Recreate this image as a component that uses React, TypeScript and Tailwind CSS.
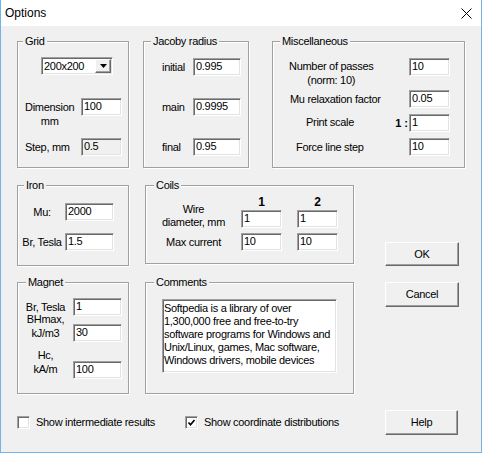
import React from 'react';

const sunken =
  'border border-t-[#a0a0a0] border-l-[#a0a0a0] border-b-white border-r-white shadow-[inset_1px_1px_0_#696969,inset_-1px_-1px_0_#e3e3e3]';
const raised =
  'border border-t-white border-l-white border-b-[#696969] border-r-[#696969] shadow-[inset_-1px_-1px_0_#a0a0a0] bg-[#f0f0f0]';

function Group({
  title,
  className,
  labelClass = 'left-[7px]',
  children,
}: {
  title: string;
  className: string;
  labelClass?: string;
  children?: React.ReactNode;
}) {
  return (
    <div className={`relative shrink-0 border border-[#a0a0a0] shadow-[inset_1px_1px_0_#fff,1px_1px_0_#fff] ${className}`}>
      <span className={`absolute -top-[7px] bg-[#f0f0f0] px-[2px] leading-[13px] ${labelClass}`}>{title}</span>
      {children}
    </div>
  );
}

function Field({ value, w, gray }: { value: string; w: string; gray?: boolean }) {
  return (
    <div className={`${sunken} ${w} h-[18px] shrink-0 pl-[2px] leading-[15px] text-[11px] ${gray ? 'bg-[#f0f0f0]' : 'bg-white'}`}>
      {value}
    </div>
  );
}

function Button({ label, className }: { label: string; className: string }) {
  return <div className={`${raised} ${className} flex shrink-0 items-center justify-center`}>{label}</div>;
}

function Check({ checked, label }: { checked?: boolean; label: string }) {
  return (
    <div className="flex items-center">
      <div className={`${sunken} flex h-[13px] w-[13px] items-center justify-center bg-white`}>
        {checked && (
          <svg width="9" height="9" viewBox="0 0 9 9">
            <polyline points="1.5,4.5 3.5,6.8 7.5,2" fill="none" stroke="#000" strokeWidth="1.7" />
          </svg>
        )}
      </div>
      <span className="ml-[6px] leading-[13px]">{label}</span>
    </div>
  );
}

export default function App() {
  const comments = [
    'Softpedia is a library of over',
    '1,300,000 free and free-to-try',
    'software programs for Windows and',
    'Unix/Linux, games, Mac software,',
    'Windows drivers, mobile devices',
  ];

  return (
    <div className="flex h-[453px] w-[482px] flex-col border-x border-b border-[#72b3ec] bg-[#f0f0f0] font-['Liberation_Sans',Arial,sans-serif] text-[11px] tracking-[-0.3px] text-black">
      {/* title bar */}
      <div className="flex h-[26px] shrink-0 items-center justify-between bg-white pl-[4px] pr-[9px]">
        <span className="text-[12px] tracking-normal">Options</span>
        <svg width="11" height="11" viewBox="0 0 11 11">
          <path d="M0.5 0.5 L10.5 10.5 M10.5 0.5 L0.5 10.5" stroke="#000" strokeWidth="1" />
        </svg>
      </div>

      <div className="flex flex-1 flex-col pl-[16px] pt-[15px]">
        {/* row 1 */}
        <div className="flex">
          <Group title="Grid" className="h-[127px] w-[112px]" labelClass="left-[5px]">
            <div className="flex flex-col">
              <div className={`${sunken} ml-[23px] mt-[15px] flex h-[18px] w-[72px] items-center justify-between bg-white pl-[2px] pr-[1px]`}>
                <span className="text-[11px]">200x200</span>
                <div className={`${raised} flex h-[14px] w-[16px] items-center justify-center`}>
                  <svg width="7" height="4" viewBox="0 0 7 4">
                    <polygon points="0,0 7,0 3.5,4" fill="#000" />
                  </svg>
                </div>
              </div>
              <div className="mt-[23px] flex h-[18px] items-start">
                <div className="w-[63px] pl-[7px] pt-[1px]">
                  <div className="inline-flex flex-col items-center leading-[14px]">
                    <span>Dimension</span>
                    <span>mm</span>
                  </div>
                </div>
                <Field value="100" w="w-[41px]" />
              </div>
              <div className="mt-[22px] flex h-[18px] items-center">
                <div className="w-[63px] pl-[7px]">Step, mm</div>
                <Field value="0.5" w="w-[41px]" gray />
              </div>
            </div>
          </Group>

          <Group title="Jacoby radius" className="ml-[14px] h-[127px] w-[106px]">
            <div className="flex flex-col pl-[18px]">
              {[
                ['initial', '0.995', 'mt-[16px]'],
                ['main', '0.9995', 'mt-[22px]'],
                ['final', '0.95', 'mt-[22px]'],
              ].map(([l, v, m]) => (
                <div key={l} className={`${m} flex h-[18px] items-center`}>
                  <div className="w-[31px]">{l}</div>
                  <Field value={v} w="w-[48px]" />
                </div>
              ))}
            </div>
          </Group>

          <Group title="Miscellaneous" className="ml-[23px] h-[127px] w-[193px]">
            <div className="flex flex-col">
              <div className="mt-[16px] flex h-[18px] items-start">
                <div className="w-[136px] pl-[16px]">
                  <div className="-mt-[1px] inline-flex flex-col items-center leading-[14px]">
                    <span>Number of passes</span>
                    <span>(norm: 10)</span>
                  </div>
                </div>
                <Field value="10" w="w-[41px]" />
              </div>
              <div className="mt-[14px] flex h-[18px] items-center">
                <div className="w-[136px] pl-[17px]">Mu relaxation factor</div>
                <Field value="0.05" w="w-[41px]" />
              </div>
              <div className="mt-[6px] flex h-[18px] items-center">
                <div className="flex w-[136px] items-center justify-between pl-[33px] pr-[1px]">
                  <span className="-mt-[2px]">Print scale</span>
                  <span className="text-[11px] font-bold tracking-normal">1 :</span>
                </div>
                <Field value="1" w="w-[41px]" />
              </div>
              <div className="mt-[6px] flex h-[18px] items-center">
                <div className="w-[136px] pl-[23px]">Force line step</div>
                <Field value="10" w="w-[41px]" />
              </div>
            </div>
          </Group>
        </div>

        {/* rows 2 and 3 with buttons */}
        <div className="mt-[17px] flex">
          <div className="flex flex-col">
            <div className="flex h-[81px] items-start">
              <Group title="Iron" className="h-[81px] w-[112px]" labelClass="left-[6px]">
                <div className="flex flex-col pl-[1px]">
                  <div className="mt-[17px] flex h-[18px] items-center">
                    <div className="w-[46px] text-center">Mu:</div>
                    <Field value="2000" w="w-[49px]" />
                  </div>
                  <div className="mt-[12px] flex h-[18px] items-center">
                    <div className="w-[46px] text-center">Br, Tesla</div>
                    <Field value="1.5" w="w-[49px]" />
                  </div>
                </div>
              </Group>

              <Group title="Coils" className="ml-[16px] h-[79px] w-[209px]" labelClass="left-[8px]">
                <div className="flex flex-col">
                  <div className="mt-[9px] flex h-[14px] text-[12px] font-bold leading-[14px] tracking-normal">
                    <div className="w-[95px]" />
                    <div className="w-[41px] text-center">1</div>
                    <div className="ml-[15px] w-[41px] text-center">2</div>
                  </div>
                  <div className="mt-[1px] flex h-[18px] items-center">
                    <div className="flex w-[95px] -translate-y-[3px] flex-col items-center leading-[13px]">
                      <span>Wire</span>
                      <span>diameter, mm</span>
                    </div>
                    <Field value="1" w="w-[41px]" />
                    <div className="w-[15px]" />
                    <Field value="1" w="w-[41px]" />
                  </div>
                  <div className="mt-[5px] flex h-[18px] items-center">
                    <div className="w-[95px] text-center">Max current</div>
                    <Field value="10" w="w-[41px]" />
                    <div className="w-[15px]" />
                    <Field value="10" w="w-[41px]" />
                  </div>
                </div>
              </Group>
            </div>

            <div className="mt-[16px] flex">
              <Group title="Magnet" className="h-[112px] w-[112px]" labelClass="left-[8px]">
                <div className="flex flex-col">
                  <div className="mt-[15px] flex h-[18px] items-center">
                    <div className="w-[55px] text-center">Br, Tesla</div>
                    <Field value="1" w="w-[49px]" />
                  </div>
                  <div className="mt-[8px] flex h-[18px] items-start">
                    <div className="-mt-[12px] flex w-[55px] flex-col items-center leading-[14px]">
                      <span>BHmax,</span>
                      <span>kJ/m3</span>
                    </div>
                    <Field value="30" w="w-[49px]" />
                  </div>
                  <div className="mt-[19px] flex h-[18px] items-start">
                    <div className="-mt-[13px] flex w-[55px] flex-col items-center leading-[14px]">
                      <span>Hc,</span>
                      <span>kA/m</span>
                    </div>
                    <Field value="100" w="w-[49px]" />
                  </div>
                </div>
              </Group>

              <Group title="Comments" className="ml-[16px] h-[112px] w-[209px]" labelClass="left-[8px]">
                <div className={`${sunken} ml-[16px] mt-[16px] h-[74px] w-[175px] bg-white pl-[1px] pt-[2px] leading-[13px]`}>
                  {comments.map((c) => (
                    <div key={c} className="whitespace-nowrap">
                      {c}
                    </div>
                  ))}
                </div>
              </Group>
            </div>
          </div>

          <div className="ml-[31px] flex flex-col">
            <Button label="OK" className="mt-[57px] h-[24px] w-[74px]" />
            <Button label="Cancel" className="mt-[16px] h-[25px] w-[74px]" />
          </div>
        </div>

        {/* bottom row */}
        <div className="mt-[16px] flex h-[25px] items-center">
          <div className="w-[168px]">
            <Check label="Show intermediate results" />
          </div>
          <div className="w-[200px]">
            <Check checked label="Show coordinate distributions" />
          </div>
          <Button label="Help" className="h-[25px] w-[73px]" />
        </div>
      </div>
    </div>
  );
}
